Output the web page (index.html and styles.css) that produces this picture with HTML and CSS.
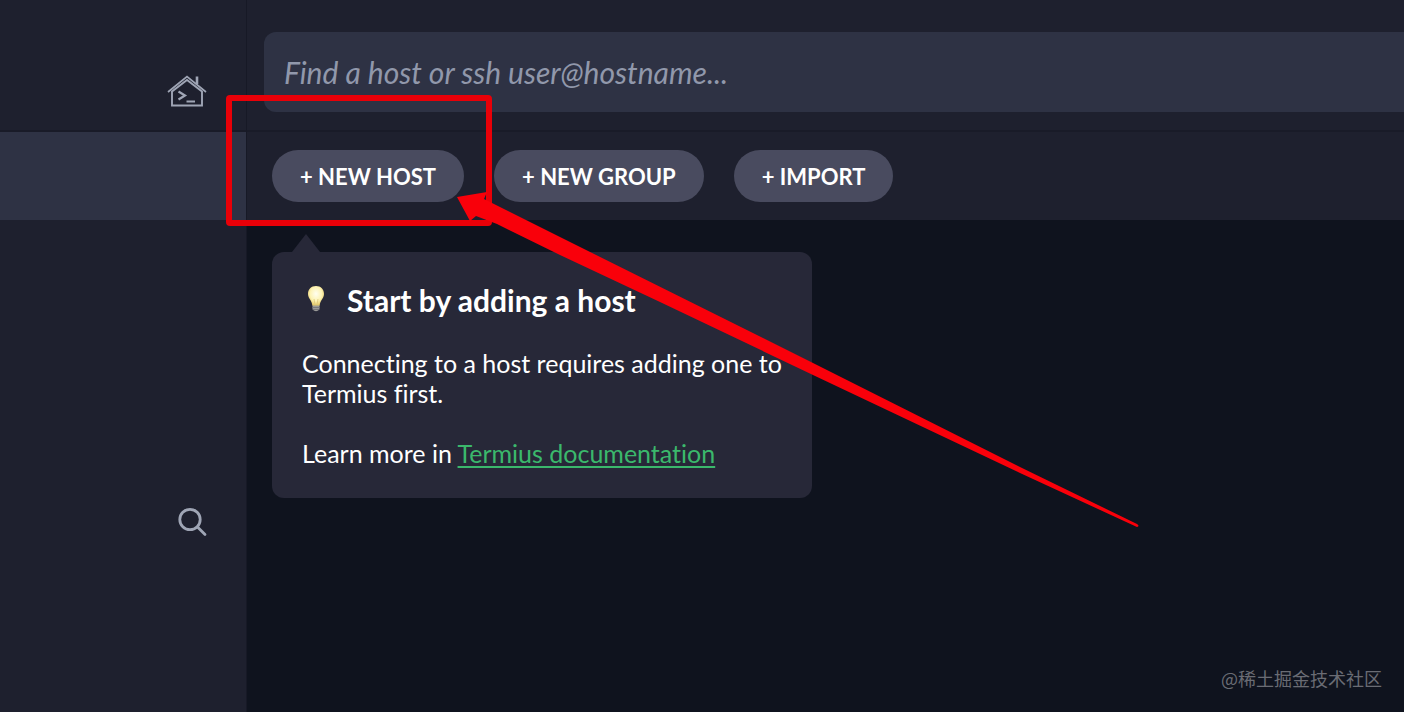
FILE: index.html
```html
<!DOCTYPE html>
<html lang="en">
<head>
  <meta charset="utf-8">
  <title>Hosts</title>
  <link rel="stylesheet" href="styles.css">
</head>
<body>
  <div class="app">
    <nav class="sidebar">
      <div class="side-top">
        <a href="#" class="side-link" aria-label="Home">
          <svg class="icon-home" width="40" height="34" viewBox="0 0 40 34" fill="none" stroke="currentColor">
            <path stroke-width="1.7" d="M1 18 L20 2.5 L39 18"/>
            <path stroke-width="1.9" d="M5 17.5 V31.5 H35 V17.5 L20 6 Z"/>
            <path stroke-width="2.6" d="M30 2.5 V10"/>
            <path stroke-width="2.2" d="M11.5 17.5 L18 21.5 L11.5 25.5 M19.5 27.5 H28"/>
          </svg>
        </a>
      </div>
      <div class="side-active"></div>
      <div class="side-rest">
        <button type="button" class="side-search" aria-label="Search">
          <svg width="32" height="32" viewBox="0 0 32 32" fill="none" stroke="currentColor" stroke-width="2.8" stroke-linecap="round">
            <circle cx="14" cy="13.5" r="10.2"/>
            <path d="M21.5 21 L29 28.5"/>
          </svg>
        </button>
      </div>
    </nav>

    <main class="content">
      <header class="header">
        <input type="text" class="search" aria-label="Find a host" placeholder="Find a host or ssh user@hostname...">
      </header>
      <div class="toolbar">
        <button type="button" class="btn">+ NEW HOST</button>
        <button type="button" class="btn">+ NEW GROUP</button>
        <button type="button" class="btn">+ IMPORT</button>
      </div>
      <section class="hosts">
        <div class="hint">
          <h2>
            <svg class="bulb" width="18" height="28" viewBox="0 0 18 28">
              <defs>
                <radialGradient id="glow" cx="50%" cy="40%" r="60%">
                  <stop offset="0" stop-color="#fffef0"/>
                  <stop offset="0.6" stop-color="#fdf3b4"/>
                  <stop offset="1" stop-color="#e2c765"/>
                </radialGradient>
              </defs>
              <path fill="#9a9a98" d="M5.5 19 H12.5 V23.5 Q9 27 5.5 23.5 Z"/>
              <path stroke="#77777a" d="M5.5 21.5 H12.5 M6 23.5 H12"/>
              <path fill="url(#glow)" d="M9 0 C4 0 1 3.5 1 8 C1 12.5 5 14.5 5.3 19.5 H12.7 C13 14.5 17 12.5 17 8 C17 3.5 14 0 9 0 Z"/>
              <path fill="none" stroke="#dcc67a" stroke-width="0.8" d="M8 19 L7 13 M10 19 L11 13"/>
            </svg>
            Start by adding a host
          </h2>
          <p>Connecting to a host requires adding one to Termius first.</p>
          <p>Learn more in <a href="#">Termius documentation</a></p>
        </div>
      </section>
    </main>
  </div>

  <!-- marks over the New Host button -->
  <svg class="marks" width="1140" height="530" viewBox="0 0 1140 530">
    <rect x="229" y="98" width="260" height="125" rx="1" fill="none" stroke="#e90008" stroke-width="6"/>
    <path fill="#f9000a" d="M457 197 L487 192 L484 199 L492 203 L560 237 L813 363 L1020 467 L1137 524 Q1140 526 1137 527 L1020 473 L813 375 L660 302 L560 255 L497 224 L476 216 L470 221 Z"/>
  </svg>
  <div class="watermark">@稀土掘金技术社区</div>
</body>
</html>
```
FILE: styles.css
```css
* { box-sizing:border-box }
body {
  margin:0;
  background:#0f131e;
  color:#fff;
  font-family:Lato, "Liberation Sans", sans-serif;
}
button, input { font-family:inherit }
.app { display:flex; min-height:100vh; overflow:hidden }

.sidebar {
  display:flex;
  flex-direction:column;
  flex:0 0 247px;
  background:#1e202e;
  border-right:1px solid #171926;
  color:#9fa5b5;
}
.side-top {
  display:flex;
  justify-content:flex-end;
  height:132px;
  padding:74px 39px 0 0;
  border-bottom:2px solid #191b28;
}
.side-link { color:inherit }
.icon-home { display:block }
.side-active { height:88px; background:#2e3244 }
.side-rest { padding:286px 38px 0 0; text-align:right }
.side-search {
  padding:0;
  border:0;
  background:none;
  color:inherit;
  cursor:pointer;
}
.side-search svg { display:block }

.content { display:flex; flex-direction:column; flex:1; min-width:0 }
.header {
  height:132px;
  padding:32px 0 0 17px;
  background:#1e202e;
  border-bottom:2px solid #191b28;
}
.search {
  display:block;
  width:100%;
  height:80px;
  padding:0 20px;
  border:0;
  border-radius:12px 0 0 12px;
  background:#2e3244;
  color:#fff;
  font-size:30px;
  font-style:italic;
}
.search::placeholder { color:#9198ab; opacity:1 }
.toolbar {
  display:flex;
  align-items:center;
  gap:30px;
  height:88px;
  padding:0 25px;
  background:#1e202e;
}
.btn {
  height:52px;
  padding:0 28px;
  border:0;
  border-radius:26px;
  background:#494b5f;
  color:#fff;
  font-size:22px;
  font-weight:bold;
  cursor:pointer;
}
.hosts { flex:1; padding:32px 25px }

.hint {
  position:relative;
  width:540px;
  max-width:100%;
  padding:30px 24px 30px 30px;
  border-radius:12px;
  background:#272838;
  font-size:25px;
  font-variant-ligatures:none;
  line-height:30px;
}
.hint:before {
  content:"";
  position:absolute;
  left:20px;
  bottom:100%;
  border:14px solid transparent;
  border-top:0;
  border-bottom:18px solid #272838;
}
.hint h2 {
  display:flex;
  align-items:center;
  gap:22px;
  margin:0 0 30px;
  padding-left:5px;
  font-size:30px;
  line-height:36px;
}
.hint p { margin:0 0 30px }
.hint p:last-child { margin:0 }
.hint a { color:#3bb86c; text-underline-offset:3px }

.marks { position:absolute; top:0; left:0; pointer-events:none }
.watermark {
  position:absolute;
  right:22px;
  bottom:21px;
  color:#6a6c74;
  font:18px/26px "Noto Sans CJK SC", sans-serif;
}
```
